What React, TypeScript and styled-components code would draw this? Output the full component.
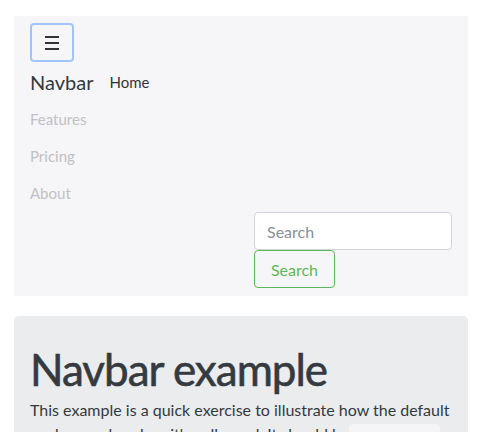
import React from "react";
import styled, { createGlobalStyle } from "styled-components";

const Global = createGlobalStyle`
  html, body { margin: 0; padding: 0; background: #fff; }
  body { font-family: "Lato", "Noto Sans", sans-serif; color: #343a40; }
  * { box-sizing: border-box; }
`;

const Page = styled.div`
  padding: 16px 12px 0 14px;
  height: 432px;
  overflow: hidden;
`;

const Nav = styled.nav`
  background: #f6f6f8;
  padding: 7px 16px 8px 16px;
  display: flex;
  flex-direction: column;
`;

const Toggler = styled.button`
  width: 44px;
  height: 39px;
  border: 2px solid #9ec5fe;
  border-radius: 4px;
  background: transparent;
  padding: 0;
  display: flex;
  align-items: center;
  justify-content: center;
`;

const Burger = styled.span`
  display: flex;
  flex-direction: column;
  gap: 4px;
  & > i { display: block; width: 14px; height: 2px; background: #333; }
`;

const BrandRow = styled.div`
  display: flex;
  align-items: center;
  gap: 16px;
  height: 38px;
  margin-top: 1px;
`;

const Brand = styled.a`
  font-size: 20px;
  color: #343a40;
  text-decoration: none;
`;

const NavLink = styled.a<{ $active?: boolean }>`
  font-size: 15px;
  text-decoration: none;
  color: ${(p) => (p.$active ? "#333" : "#c0c0c6")};
  display: block;
  line-height: ${(p) => (p.$active ? "normal" : "37px")};
`;

const Form = styled.form`
  margin-left: auto;
  width: 198px;
  display: flex;
  flex-direction: column;
  align-items: flex-start;
`;

const Input = styled.input`
  width: 198px;
  height: 38px;
  border: 1px solid #ced4da;
  border-radius: 4px;
  padding: 0 12px;
  font-family: inherit;
  font-size: 16px;
  background: #fff;
  &::placeholder { color: #8a8f96; }
`;

const SearchButton = styled.button`
  height: 38px;
  width: 81px;
  padding: 0;
  border: 1px solid #5cb85c;
  border-radius: 4px;
  background: transparent;
  color: #5cb85c;
  font-family: inherit;
  font-size: 16px;
`;

const Jumbo = styled.div`
  margin-top: 20px;
  background: #ebecee;
  border-radius: 5px;
  padding: 27px 16px 32px 16px;
`;

const Title = styled.h1`
  font-size: 44px;
  font-weight: 400;
  letter-spacing: -1px;
  -webkit-text-stroke: 0.6px #343a40;
  margin: 0 0 2px 0;
  color: #343a40;
  line-height: 1.2;
`;

const Lead = styled.p`
  font-size: 16px;
  line-height: 24px;
  margin: 0;
  color: #343a40;
`;

const InlineBtn = styled.span`
  display: inline-block;
  width: 91px;
  height: 30px;
  background: #f5f5f7;
  border-radius: 4px;
  vertical-align: top;
  margin-top: 2px;
`;

export default function App() {
  return (
    <>
      <Global />
      <Page>
        <Nav>
          <Toggler aria-label="Toggle navigation">
            <Burger><i /><i /><i /></Burger>
          </Toggler>
          <BrandRow>
            <Brand href="#">Navbar</Brand>
            <NavLink $active href="#">Home</NavLink>
          </BrandRow>
          <NavLink href="#">Features</NavLink>
          <NavLink href="#">Pricing</NavLink>
          <NavLink href="#">About</NavLink>
          <Form onSubmit={(e) => e.preventDefault()}>
            <Input placeholder="Search" />
            <SearchButton type="submit">Search</SearchButton>
          </Form>
        </Nav>
        <Jumbo>
          <Title>Navbar example</Title>
          <Lead>
            This example is a quick exercise to illustrate how the default
            navbar works when it's collapsed. It should be<InlineBtn /> on
            wider screens.
          </Lead>
        </Jumbo>
      </Page>
    </>
  );
}
